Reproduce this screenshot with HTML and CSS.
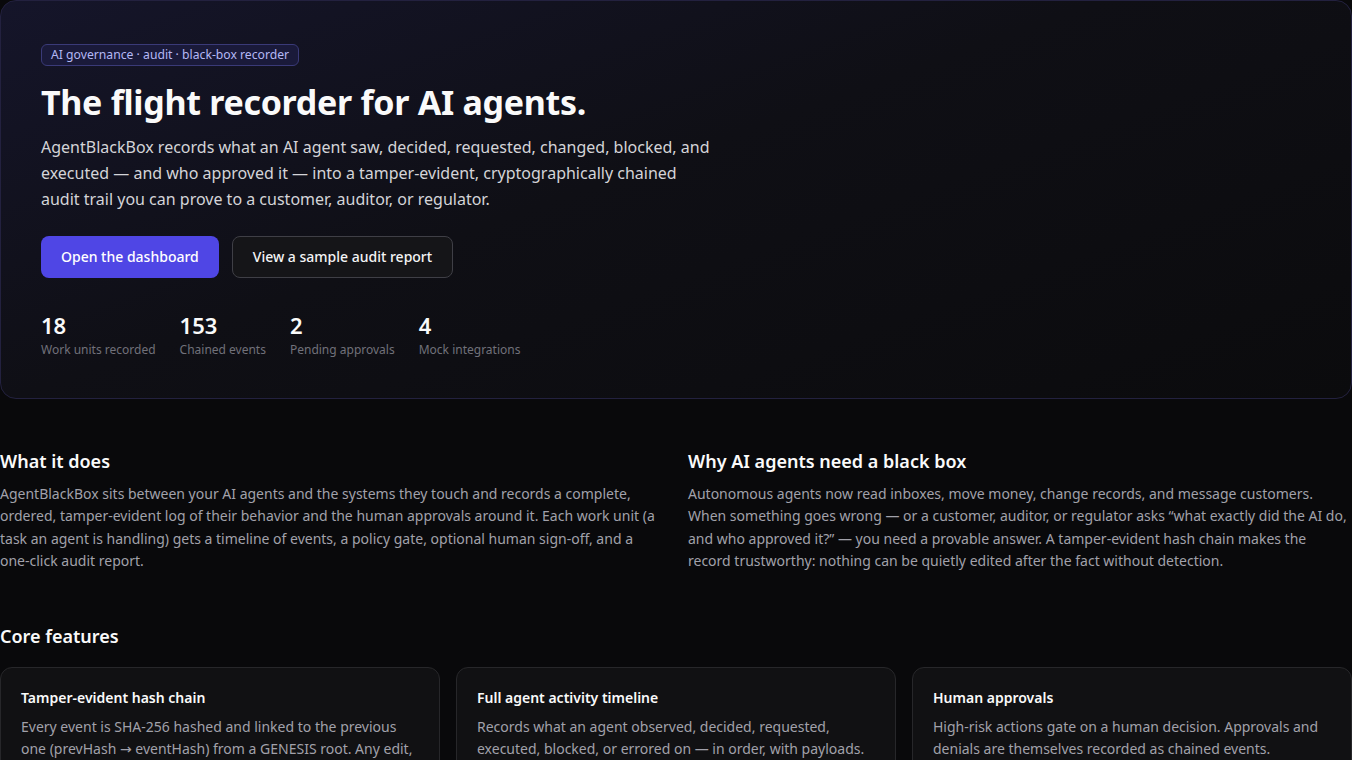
FILE: index.html
```html
<!DOCTYPE html>
<html>

<head>
    <title>AgentBlackBox</title>
    <link rel="stylesheet" href="styles.css">
</head>

<body>
    <section class="hero">
        <span class="badge">AI governance · audit · black-box recorder</span>
        <h1>The flight recorder for AI agents.</h1>
        <p class="lead">AgentBlackBox records what an AI agent saw, decided, requested, changed, blocked, and executed — and who approved it — into a tamper-evident, cryptographically chained audit trail you can prove to a customer, auditor, or regulator.</p>

        <div class="actions">
            <a href="#" class="btn btn-primary">Open the dashboard</a>
            <a href="#" class="btn btn-ghost">View a sample audit report</a>
        </div>

        <div class="stats">
            <div class="stat">
                <div class="stat-value">18</div>
                <div class="stat-label">Work units recorded</div>
            </div>
            <div class="stat">
                <div class="stat-value">153</div>
                <div class="stat-label">Chained events</div>
            </div>
            <div class="stat">
                <div class="stat-value">2</div>
                <div class="stat-label">Pending approvals</div>
            </div>
            <div class="stat">
                <div class="stat-value">4</div>
                <div class="stat-label">Mock integrations</div>
            </div>
        </div>
    </section>

    <section class="about">
        <div>
            <h2>What it does</h2>
            <p>AgentBlackBox sits between your AI agents and the systems they touch and records a complete, ordered, tamper-evident log of their behavior and the human approvals around it. Each work unit (a task an agent is handling) gets a timeline of events, a policy gate, optional human sign-off, and a one-click audit report.</p>
        </div>
        <div>
            <h2>Why AI agents need a black box</h2>
            <p>Autonomous agents now read inboxes, move money, change records, and message customers. When something goes wrong — or a customer, auditor, or regulator asks “what exactly did the AI do, and who approved it?” — you need a provable answer. A tamper-evident hash chain makes the record trustworthy: nothing can be quietly edited after the fact without detection.</p>
        </div>
    </section>

    <section class="features">
        <h2>Core features</h2>
        <div class="feature-grid">
            <div class="card">
                <h3>Tamper-evident hash chain</h3>
                <p>Every event is SHA-256 hashed and linked to the previous one (prevHash → eventHash) from a GENESIS root. Any edit, deletion or reordering breaks the chain and is flagged on verification.</p>
            </div>
            <div class="card">
                <h3>Full agent activity timeline</h3>
                <p>Records what an agent observed, decided, requested, executed, blocked, or errored on — in order, with payloads.</p>
            </div>
            <div class="card">
                <h3>Human approvals</h3>
                <p>High-risk actions gate on a human decision. Approvals and denials are themselves recorded as chained events.</p>
            </div>
        </div>
    </section>
</body>

</html>
```

FILE: styles.css
```css
body {
    margin: 0;
    background: #09090b;
    color: #fafafa;
    font-family: 'Noto Sans', 'DejaVu Sans', sans-serif;
}

.hero {
    padding: 41px 40px 40px;
    border: 1px solid #23213f;
    border-radius: 16px;
    background: linear-gradient(160deg, #15152a 0%, #0f0f15 45%, #0b0b0d 100%);
}

.badge {
    display: inline-block;
    padding: 2px 9px;
    font-size: 12.2px;
    line-height: 16px;
    color: #b4b8f5;
    background: #1a1a3a;
    border: 1px solid #3a3a78;
    border-radius: 6px;
}

h1 {
    margin: 15px 0 11px;
    font-size: 34px;
    line-height: 42px;
    font-weight: 700;
    letter-spacing: -0.3px;
}

.lead {
    max-width: 672px;
    margin: 0;
    font-size: 16px;
    line-height: 26px;
    color: #d4d4d8;
}

.actions {
    display: flex;
    gap: 13px;
    margin-top: 24px;
}

.btn {
    display: inline-block;
    padding: 0 20px;
    height: 42px;
    line-height: 40px;
    font-size: 14px;
    font-weight: 500;
    border-radius: 8px;
    border: 1px solid transparent;
    text-decoration: none;
    box-sizing: border-box;
}

.btn-primary {
    padding: 0 19px;
    background: #4f46e5;
    color: #fff;
}

.btn-ghost {
    background: #151518;
    border-color: #3f3f46;
    color: #f4f4f5;
}

.stats {
    display: flex;
    gap: 24px;
    margin-top: 32px;
}

.stat-value {
    font-size: 22px;
    line-height: 30px;
    font-weight: 600;
}

.stat-label {
    margin-top: 2px;
    font-size: 12px;
    line-height: 16px;
    color: #71717a;
}

h2 {
    margin: 0 0 10px;
    font-size: 18px;
    line-height: 24px;
    font-weight: 600;
}

.about {
    display: grid;
    grid-template-columns: 1fr 1fr;
    gap: 24px;
    margin-top: 50px;
}

.about p {
    margin: 0;
    font-size: 14px;
    line-height: 22.4px;
    color: #a1a1aa;
}

.features {
    margin-top: 51px;
}

.feature-grid {
    display: grid;
    grid-template-columns: repeat(3, 1fr);
    gap: 16px;
    margin-top: 19px;
}

.card {
    padding: 20px;
    background: #111113;
    border: 1px solid #27272a;
    border-radius: 12px;
}

.card h3 {
    margin: 0 0 8px;
    font-size: 14px;
    line-height: 20px;
    font-weight: 600;
}

.card p {
    margin: 0;
    font-size: 14px;
    line-height: 22px;
    color: #a1a1aa;
}
```
